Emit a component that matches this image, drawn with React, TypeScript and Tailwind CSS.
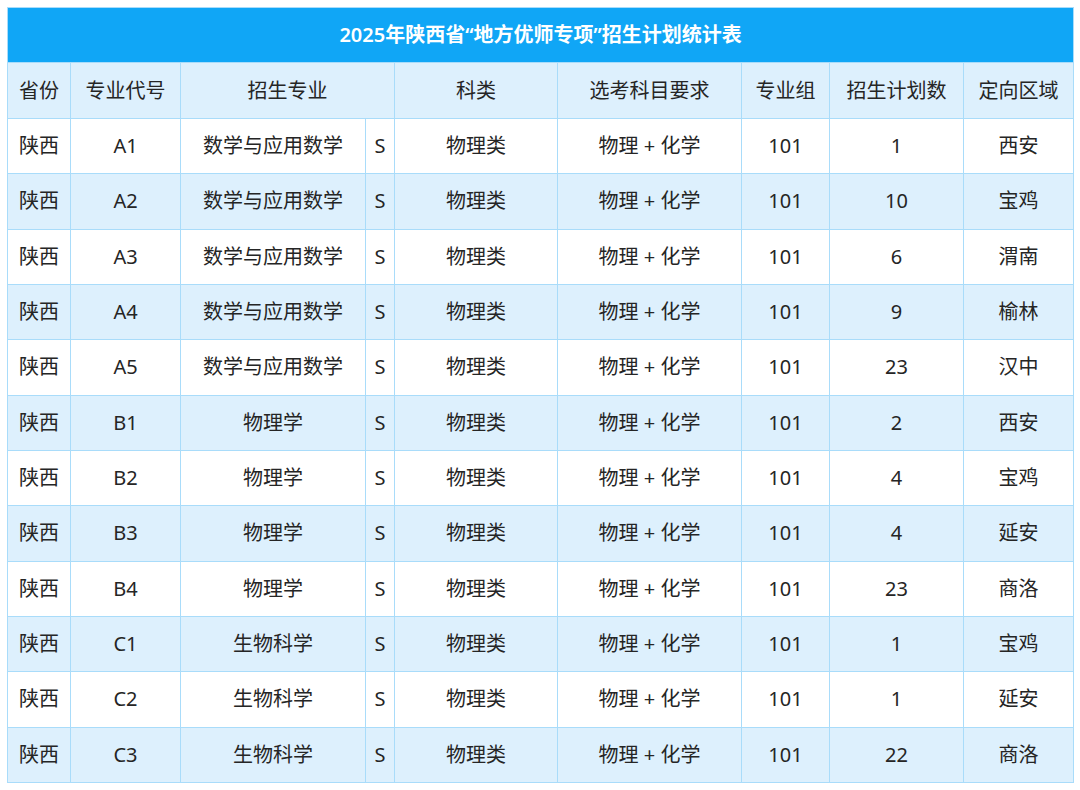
const rows: [string, string, string, string][] = [
  ["A1", "数学与应用数学", "1", "西安"],
  ["A2", "数学与应用数学", "10", "宝鸡"],
  ["A3", "数学与应用数学", "6", "渭南"],
  ["A4", "数学与应用数学", "9", "榆林"],
  ["A5", "数学与应用数学", "23", "汉中"],
  ["B1", "物理学", "2", "西安"],
  ["B2", "物理学", "4", "宝鸡"],
  ["B3", "物理学", "4", "延安"],
  ["B4", "物理学", "23", "商洛"],
  ["C1", "生物科学", "1", "宝鸡"],
  ["C2", "生物科学", "1", "延安"],
  ["C3", "生物科学", "22", "商洛"],
]

const widths = [63, 110, 185, 29, 163, 184, 88, 134, 110]

export default function App() {
  return (
    <div
      className="w-[1080px] h-[790px] bg-white pt-[7px] pl-[7px]"
      style={{ fontFamily: '"Noto Sans", "Noto Sans CJK SC", sans-serif' }}
    >
      <table className="table-fixed border-collapse w-[1066px] text-[20px] text-[#252525]">
        <colgroup>
          {widths.map((w, i) => (
            <col key={i} style={{ width: w }} />
          ))}
        </colgroup>
        <thead>
          <tr className="h-[55px]">
            <th
              colSpan={9}
              className="bg-[#10a6f6] border border-[#a9dcfa] text-white text-[20px] font-semibold"
            >
              2025年陕西省“地方优师专项”招生计划统计表
            </th>
          </tr>
          <tr className="h-[56px] bg-[#ddf0fd]">
            <th className="border border-[#a9dcfa] font-normal">省份</th>
            <th className="border border-[#a9dcfa] font-normal">专业代号</th>
            <th colSpan={2} className="border border-[#a9dcfa] font-normal">
              招生专业
            </th>
            <th className="border border-[#a9dcfa] font-normal">科类</th>
            <th className="border border-[#a9dcfa] font-normal">选考科目要求</th>
            <th className="border border-[#a9dcfa] font-normal">专业组</th>
            <th className="border border-[#a9dcfa] font-normal">招生计划数</th>
            <th className="border border-[#a9dcfa] font-normal">定向区域</th>
          </tr>
        </thead>
        <tbody>
          {rows.map(([code, major, num, area], i) => (
            <tr key={code} className={i % 2 === 1 ? "h-[55.33px] bg-[#ddf0fd]" : "h-[55.33px] bg-white"}>
              <td className="border border-[#a9dcfa] text-center">陕西</td>
              <td className="border border-[#a9dcfa] text-center">{code}</td>
              <td className="border border-[#a9dcfa] text-center">{major}</td>
              <td className="border border-[#a9dcfa] text-center">S</td>
              <td className="border border-[#a9dcfa] text-center">物理类</td>
              <td className="border border-[#a9dcfa] text-center">物理 + 化学</td>
              <td className="border border-[#a9dcfa] text-center">101</td>
              <td className="border border-[#a9dcfa] text-center">{num}</td>
              <td className="border border-[#a9dcfa] text-center">{area}</td>
            </tr>
          ))}
        </tbody>
      </table>
    </div>
  )
}
